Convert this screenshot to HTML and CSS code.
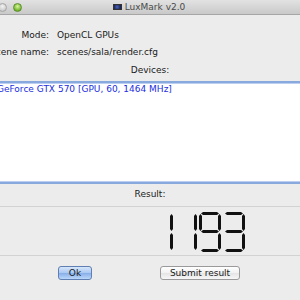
FILE: index.html
```html
<!DOCTYPE html>
<html lang="en">
<head>
    <meta charset="UTF-8">
    <meta name="viewport" content="width=device-width, initial-scale=1.0">
    <title>LuxMark v2.0</title>
    <link rel="stylesheet" href="styles.css">
</head>
<body>
    <div class="window">
        <header class="titlebar">
            <span class="light light-off"></span>
            <span class="light light-green"></span>
            <div class="title">
                <span class="app-icon"></span>
                <span>LuxMark v2.0</span>
            </div>
        </header>
        <main class="content">
            <div class="info">
                <span class="label">Mode:</span>
                <span class="value">OpenCL GPUs</span>
                <span class="label">Scene name:</span>
                <span class="value">scenes/sala/render.cfg</span>
            </div>
            <div class="caption">Devices:</div>
            <ul class="device-list">
                <li>GeForce GTX 570 [GPU, 60, 1464 MHz]</li>
            </ul>
            <div class="caption result-caption">Result:</div>
            <div class="lcd" aria-label="1193" title="1193">
                <div class="digit d1"><i class="b"></i><i class="c"></i></div>
                <div class="digit d1"><i class="b"></i><i class="c"></i></div>
                <div class="digit d9"><i class="a"></i><i class="b"></i><i class="c"></i><i class="d"></i><i class="f"></i><i class="g"></i></div>
                <div class="digit d3"><i class="a"></i><i class="b"></i><i class="c"></i><i class="d"></i><i class="g"></i></div>
            </div>
            <div class="buttons">
                <button class="btn btn-default">Ok</button>
                <button class="btn">Submit result</button>
            </div>
        </main>
    </div>
</body>
</html>
```
FILE: styles.css
```css
*{
    margin: 0;
    padding: 0;
    box-sizing: border-box;
}
body{
    width: 300px;
    height: 300px;
    overflow: hidden;
    background-color: #ececec;
    font-family: "DejaVu Sans", "Noto Sans", sans-serif;
    font-size: 9px;
    color: #1a1a1a;
}
.titlebar{
    height: 15px;
    position: relative;
    background: linear-gradient(#e2e2e2, #c9c9c9);
    border-bottom: 1px solid #a6a6a6;
    display: flex;
    justify-content: center;
    align-items: center;
}
.light{
    position: absolute;
    top: 3px;
    width: 9px;
    height: 9px;
    border-radius: 50%;
}
.light-off{
    left: -2px;
    background: radial-gradient(circle at 50% 35%, #f2f2f2, #bdbdbd);
    border: 1px solid #a5a5a5;
}
.light-green{
    left: 13px;
    background: radial-gradient(circle at 50% 35%, #d8f59a, #72b52b 70%, #4f8d1c);
    border: 1px solid #5b8f2c;
}
.title{
    display: flex;
    align-items: center;
    gap: 3px;
    color: #4a4a4a;
    font-size: 9px;
    margin-left: -2px;
}
.app-icon{
    width: 9px;
    height: 6px;
    background: radial-gradient(circle at 45% 50%, #4a63c0, #1d2a5a 70%);
    border: 1px solid #333;
}
.info{
    display: grid;
    grid-template-columns: 49px auto;
    column-gap: 8px;
    padding-top: 12px;
    line-height: 17px;
}
.label{
    display: flex;
    justify-content: flex-end;
    white-space: nowrap;
}
.value{
    white-space: nowrap;
}
.caption{
    text-align: center;
    line-height: 17px;
    margin-top: 1px;
}
.device-list{
    list-style: none;
    margin: 2px -10px 0;
    height: 103px;
    background: #fff;
    border-top: 2px solid #88a9dd;
    border-bottom: 2px solid #88a9dd;
    box-shadow: inset 0 1px #bccff0, inset 0 -1px #bccff0;
    padding-left: 7px;
}
.device-list li{
    line-height: 13px;
    color: #1c2ee0;
    white-space: nowrap;
}
.result-caption{
    margin-top: 2px;
}
.lcd{
    margin-top: 3px;
    border-top: 1px solid #d2d2d2;
    border-bottom: 1px solid #d2d2d2;
    padding: 5px 55px 3px 0;
    display: flex;
    justify-content: flex-end;
    gap: 2px;
}
.digit{
    width: 22px;
    height: 40px;
    position: relative;
}
.digit i{
    position: absolute;
    background: #111;
}
.digit .a, .digit .d, .digit .g{
    left: 2px;
    width: 18px;
    height: 3px;
    clip-path: polygon(2px 0, 16px 0, 18px 50%, 16px 100%, 2px 100%, 0 50%);
}
.digit .a{ top: 0; }
.digit .g{ top: 18px; }
.digit .d{ bottom: 0; }
.digit .b, .digit .c, .digit .e, .digit .f{
    width: 3px;
    height: 17px;
    clip-path: polygon(50% 0, 100% 2px, 100% 15px, 50% 100%, 0 15px, 0 2px);
}
.digit .b{ right: 0; top: 2px; }
.digit .c{ right: 0; top: 21px; }
.digit .e{ left: 0; top: 21px; }
.digit .f{ left: 0; top: 2px; }
.buttons{
    display: flex;
    gap: 68px;
    padding: 10px 0 0 58px;
}
.btn{
    height: 14px;
    font-family: "DejaVu Sans", "Noto Sans", sans-serif;
    font-size: 9px;
    color: #1a1a1a;
    border: 1px solid #9a9a9a;
    border-radius: 3px;
    background: linear-gradient(#ffffff, #f1f1f1 50%, #e4e4e4 51%, #f7f7f7);
    width: 80px;
    line-height: 12px;
}
.btn-default{
    width: 34px;
    border-color: #5f7fb3;
    background: linear-gradient(#d6e6fb, #a9c8f1 50%, #86aee8 51%, #bcd7fa);
}
```
